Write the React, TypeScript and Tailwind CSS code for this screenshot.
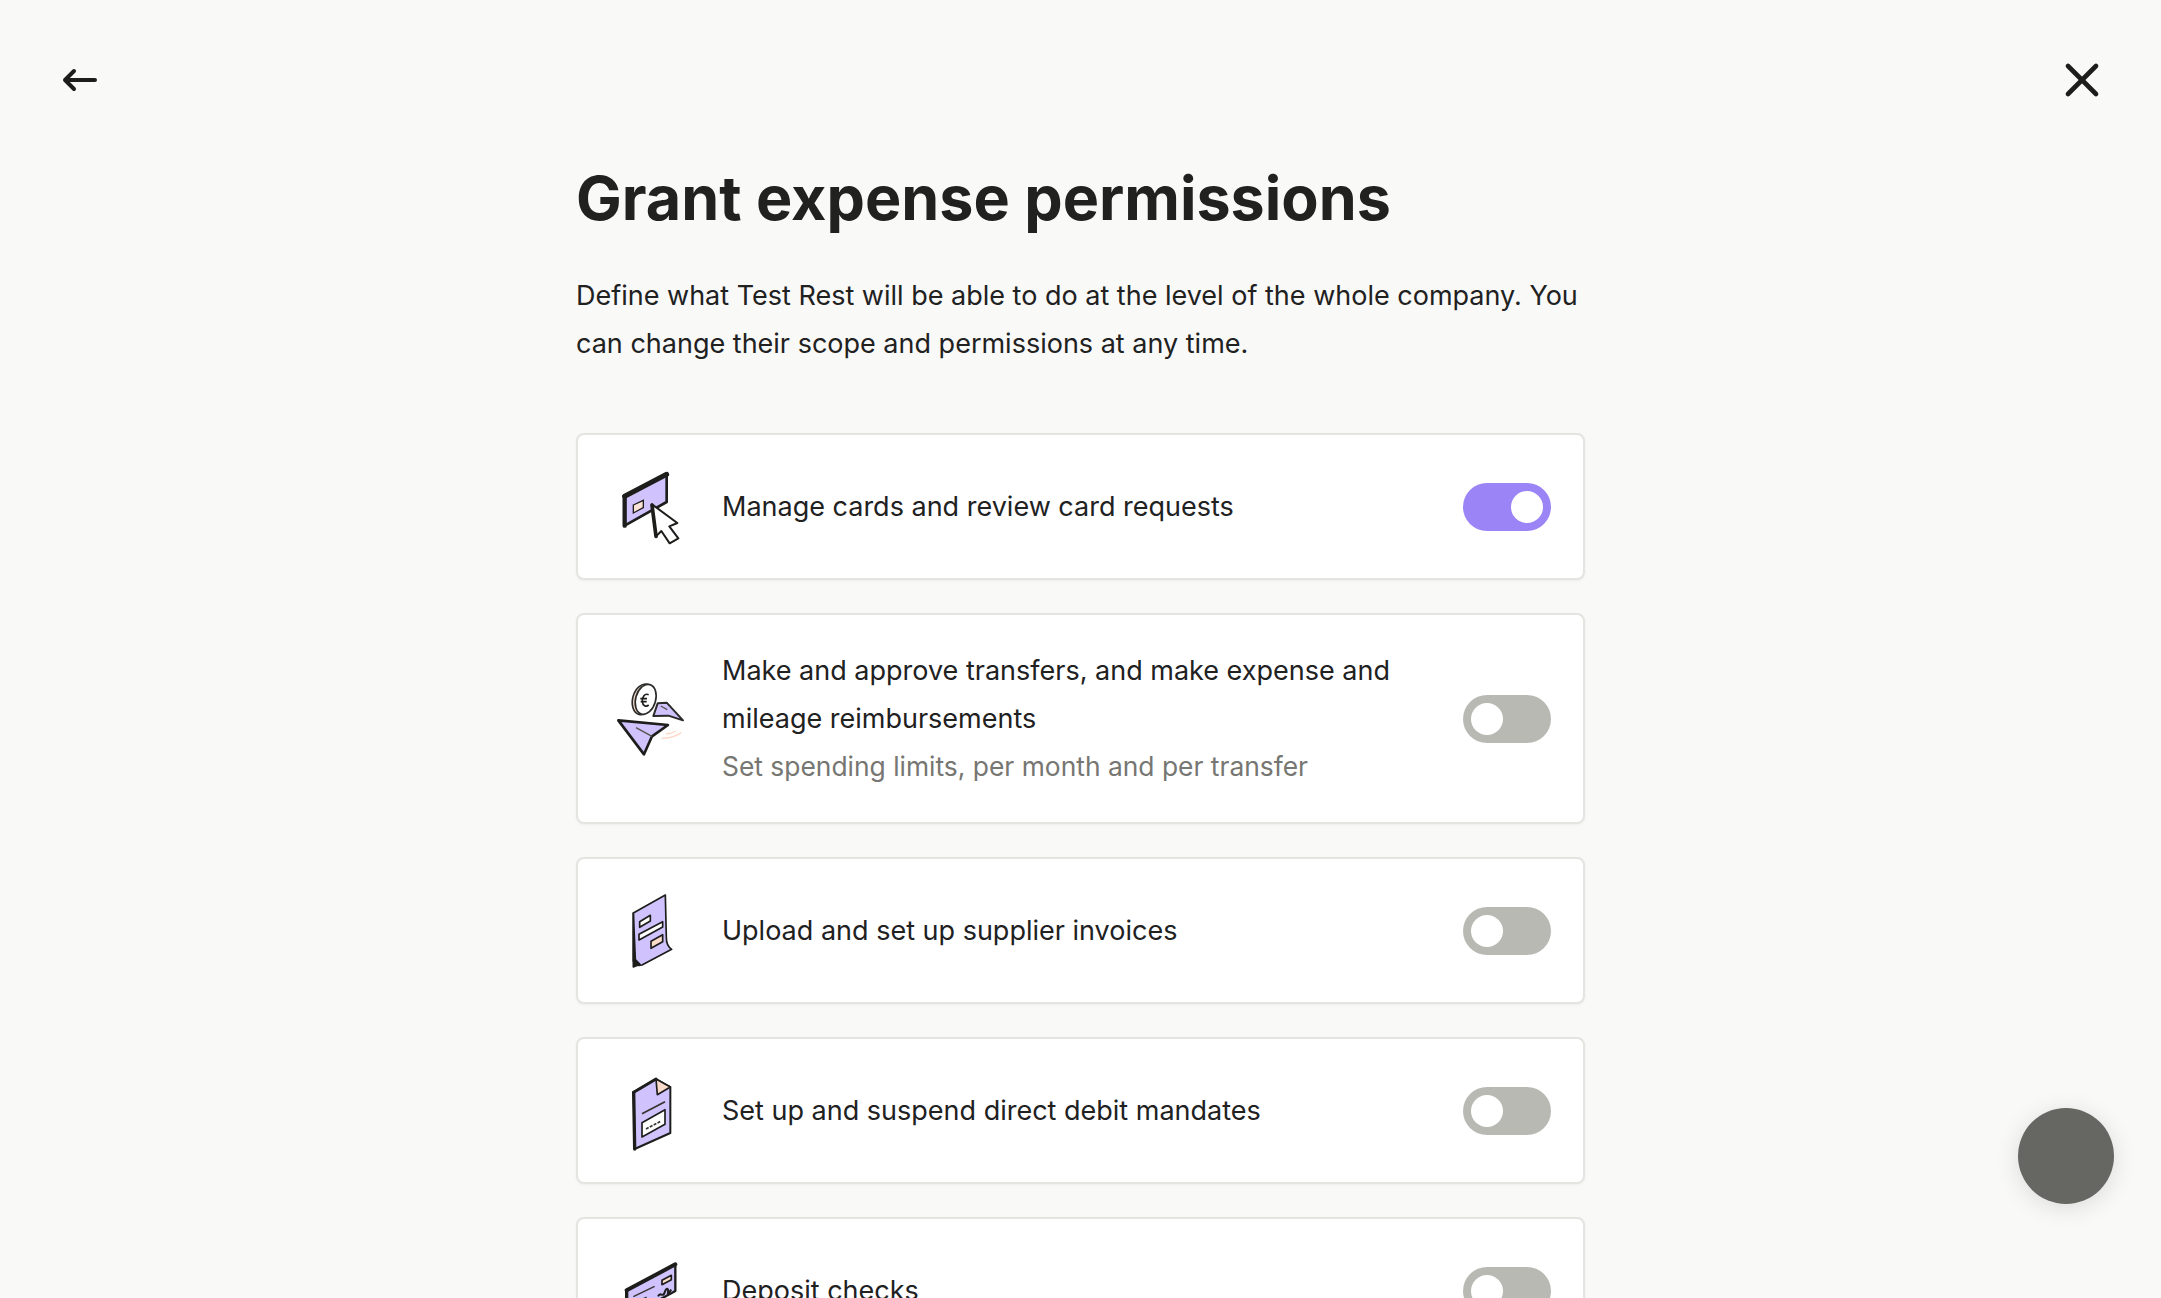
import { X } from "lucide-react"
import type { ReactNode } from "react"

function BackArrow() {
  return (
    <svg viewBox="0 0 40 40" className="h-10 w-10" fill="none" stroke="#1d1d1b" strokeWidth="4" strokeLinecap="round" strokeLinejoin="round">
      <path d="M6 20 H36 M15 11 L6 20 L15 29" />
    </svg>
  )
}

function CardIcon() {
  return (
    <svg viewBox="120 138 240 240" className="h-20 w-20">
      <path d="M164 226 L290 160 L290 243 L164 314 Z" fill="#cfc2fd" stroke="#1d1d1b" strokeWidth="8" strokeLinejoin="round" />
      <path d="M164 226 L290 160" stroke="#1d1d1b" strokeWidth="15" strokeLinecap="round" />
      <path d="M164 226 L164 314" stroke="#1d1d1b" strokeWidth="13" strokeLinecap="round" />
      <path d="M190 252 L220 238 L220 260 L190 276 Z" fill="#fbe3d6" stroke="#1d1d1b" strokeWidth="4" />
      <path d="M246 250 L322 306 L298 316 L325 352 L299 367 L274 330 L258 346 Z" fill="#fff" stroke="#1d1d1b" strokeWidth="6" strokeLinejoin="round" />
      <path d="M246 252 L258 346" stroke="#1d1d1b" strokeWidth="11" strokeLinecap="round" />
    </svg>
  )
}

function TransferIcon() {
  return (
    <svg viewBox="60 54 240 240" className="h-20 w-20">
      <ellipse cx="160" cy="115" rx="32" ry="47" transform="rotate(16 160 115)" fill="#f6dccd" stroke="#2b2b29" strokeWidth="5" />
      <ellipse cx="167" cy="115" rx="30" ry="46" transform="rotate(16 167 115)" fill="#fff" stroke="#2b2b29" strokeWidth="5" />
      <path d="M176 101 C164 96 156 108 157 122 C158 134 168 139 176 132 M151 113 L171 113 M152 122 L170 122" fill="none" stroke="#1d1d1b" strokeWidth="5" />
      <path d="M203 127 L230 125 L279 178 L235 164 L190 165 Z" fill="#cfc2fd" stroke="#2b2b29" strokeWidth="6" strokeLinejoin="round" />
      <path d="M212 135 L232 146" stroke="#55534e" strokeWidth="4" />
      <path d="M85 178 L234 192 L186 226 L162 280 Z" fill="#cfc2fd" stroke="#1d1d1b" strokeWidth="8" strokeLinejoin="round" />
      <path d="M138 200 L186 226" stroke="#55534e" strokeWidth="4" />
      <path d="M228 219 C240 218 250 215 258 210 M215 232 C235 232 258 226 274 215" fill="none" stroke="#fbd9c6" strokeWidth="4" />
    </svg>
  )
}

function InvoiceIcon() {
  return (
    <svg viewBox="30 30 240 240" className="h-20 w-20">
      <path d="M100 96 L196 42 L199 170 C199 185 205 198 215 205 L126 252 C112 256 104 250 100 240 Z" fill="#cfc2fd" stroke="#1d1d1b" strokeWidth="5" strokeLinejoin="round" />
      <path d="M100 96 L100 258 L120 250 L106 236 Z" fill="#1d1d1b" stroke="#1d1d1b" strokeWidth="5" strokeLinejoin="round" />
      <path d="M119 122 L151 103 L151 120 L119 139 Z" fill="#fff" stroke="#1d1d1b" strokeWidth="5" strokeLinejoin="round" />
      <path d="M117 160 L188 122 L188 138 L117 177 Z" fill="#fff" stroke="#1d1d1b" strokeWidth="5" strokeLinejoin="round" />
      <path d="M153 181 L188 161 L188 182 L153 202 Z" fill="#fbdcca" stroke="#1d1d1b" strokeWidth="5" strokeLinejoin="round" />
    </svg>
  )
}

function MandateIcon() {
  return (
    <svg viewBox="30 30 240 240" className="h-20 w-20">
      <path d="M101 94 L168 54 L211 78 L211 216 L104 264 Z" fill="#cfc2fd" stroke="#1d1d1b" strokeWidth="6" strokeLinejoin="round" />
      <path d="M101 94 L104 264" stroke="#1d1d1b" strokeWidth="10" strokeLinecap="round" />
      <path d="M101 94 L168 54" stroke="#1d1d1b" strokeWidth="9" strokeLinecap="round" />
      <path d="M168 54 L211 78 L172 101 Z" fill="#fbdcca" stroke="#1d1d1b" strokeWidth="5" strokeLinejoin="round" />
      <path d="M126 158 L195 122" stroke="#35342f" strokeWidth="5" />
      <path d="M126 185 L195 146 L195 190 L126 228 Z" fill="#fff" stroke="#1d1d1b" strokeWidth="5" strokeLinejoin="round" />
      <path d="M138 204 L184 180" stroke="#35342f" strokeWidth="5" strokeDasharray="9 4" />
    </svg>
  )
}

function CheckIcon() {
  return (
    <svg viewBox="30 120 240 240" className="h-20 w-20">
      <path d="M80 238 L226 160 L226 240 L80 320 Z" fill="#cfc2fd" stroke="#1d1d1b" strokeWidth="7" strokeLinejoin="round" />
      <path d="M80 238 L226 160" stroke="#1d1d1b" strokeWidth="12" strokeLinecap="round" />
      <path d="M80 238 L80 320" stroke="#1d1d1b" strokeWidth="10" strokeLinecap="round" />
      <path d="M186 208 L214 193 L214 206 L186 221 Z" fill="#fbdcca" stroke="#1d1d1b" strokeWidth="5" strokeLinejoin="round" />
      <path d="M100 257 L164 226 M100 278 L140 258" stroke="#35342f" strokeWidth="4" />
      <path d="M174 256 C182 240 188 262 194 244 C198 232 206 226 204 246 C202 254 210 240 214 236" fill="none" stroke="#1d1d1b" strokeWidth="6" />
    </svg>
  )
}

function Toggle({ on }: { on?: boolean }) {
  return (
    <div className={`flex h-12 w-[88px] shrink-0 items-center rounded-full px-2 ${on ? "justify-end bg-[#9b84f5]" : "justify-start bg-[#b9b9b4]"}`}>
      <div className="h-8 w-8 rounded-full bg-white" />
    </div>
  )
}

function PermissionRow({ icon, title, hint, on }: { icon: ReactNode; title: string; hint?: string; on?: boolean }) {
  return (
    <div className="flex shrink-0 items-center gap-8 rounded-lg border-2 border-[#e4e4e1] bg-white px-8 py-[31.5px] shadow-[0_1px_3px_rgba(0,0,0,0.05)]">
      <div className="h-20 w-20 shrink-0">{icon}</div>
      <div className="flex-1 text-[27px] leading-[48px] text-[#21211f]">
        <div className="w-[700px]">{title}</div>
        {hint && <div className="mb-[2px] text-[26.4px] leading-[46px] text-[#767672]">{hint}</div>}
      </div>
      <Toggle on={on} />
    </div>
  )
}

export default function App() {
  return (
    <div className="relative h-[1298px] overflow-hidden bg-[#f9f9f7] font-['Inter',sans-serif]">
      <div className="mt-[52px] flex h-14 items-center justify-between pl-[59px] pr-[51px]">
        <BackArrow />
        <X className="h-14 w-14 text-[#1d1d1b]" strokeWidth={2} />
      </div>

      <div className="mx-auto mt-[52px] flex w-[1009px] flex-col">
        <h1 className="text-[61px] font-bold leading-[76px] text-[#21211f]">Grant expense permissions</h1>
        <p className="mt-9 text-[27px] leading-[48px] text-[#21211f]">
          Define what Test Rest will be able to do at the level of the whole company. You can change their scope and permissions at any time.
        </p>
        <div className="mt-[65px] flex flex-col gap-[33px]">
          <PermissionRow icon={<CardIcon />} title="Manage cards and review card requests" on />
          <PermissionRow
            icon={<TransferIcon />}
            title="Make and approve transfers, and make expense and mileage reimbursements"
            hint="Set spending limits, per month and per transfer"
          />
          <PermissionRow icon={<InvoiceIcon />} title="Upload and set up supplier invoices" />
          <PermissionRow icon={<MandateIcon />} title="Set up and suspend direct debit mandates" />
          <PermissionRow icon={<CheckIcon />} title="Deposit checks" />
        </div>
      </div>

      {/* chat launcher */}
      <div className="absolute left-[2018px] top-[1108px] h-24 w-24 rounded-full bg-[#666662] shadow-[0_4px_24px_rgba(0,0,0,0.12)]" />
    </div>
  )
}
